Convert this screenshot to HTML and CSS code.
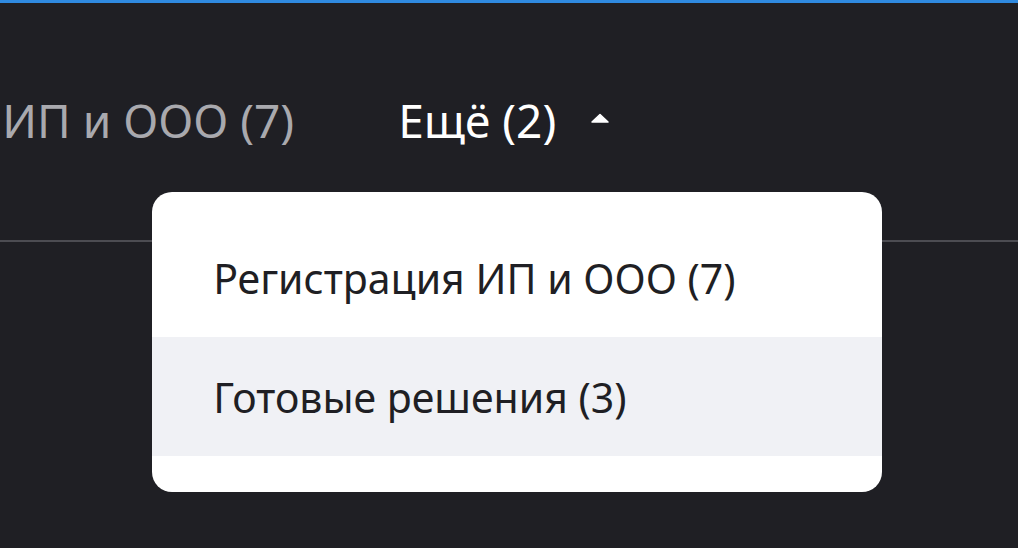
FILE: index.html
```html
<!DOCTYPE html>
<html>
<head>
    <title>Услуги</title>
    <link rel="stylesheet" href="styles.css">
</head>
<body>

<div class="topbar"></div>

<nav class="tabs">
    <div class="tabs-track">
        <span class="tab">Регистрация ИП и ООО (7)</span>
        <span class="tab tab-more">
            Ещё (2)
            <svg class="caret" width="20" height="10" viewBox="0 0 20 10"><path d="M2 9 L10 1.5 L18 9 Z" fill="#fff" stroke="#fff" stroke-width="1.5" stroke-linejoin="round"/></svg>
            <div class="dropdown">
                <div class="dropdown-item">Регистрация ИП и ООО (7)</div>
                <div class="dropdown-item active">Готовые решения (3)</div>
            </div>
        </span>
    </div>
</nav>

</body>
</html>
```

FILE: styles.css
```css
body {
    margin: 0; background-color: #1f1f24; font-family: 'Noto Sans', sans-serif; height: 548px; overflow: hidden;
}

.topbar { height: 3px; background-color: #2f8ae0;
}

.tabs { height: 237px; border-bottom: solid #4c4c52 2px; overflow: visible;
}

.tabs-track { display: flex; align-items: center; gap: 104px; padding-top: 87px; margin-left: -292px; white-space: nowrap;
}

.tab { font-size: 46px; color: #a9a9ae; line-height: 60px;
}

.tab-more { position: relative; color: #fff; display: flex; align-items: center;
}

.caret { margin-left: 34px; margin-top: -4px;
}

.dropdown { position: absolute; left: -246px; top: 102px; width: 730px; background-color: #fff; border-radius: 20px; padding: 26px 0 36px 0; z-index: 10;
}

.dropdown-item { height: 119px; display: flex; align-items: center; padding-left: 61px; font-size: 41px; color: #1f1f24;
}

.dropdown-item.active { background-color: #f0f1f5;
}
```
